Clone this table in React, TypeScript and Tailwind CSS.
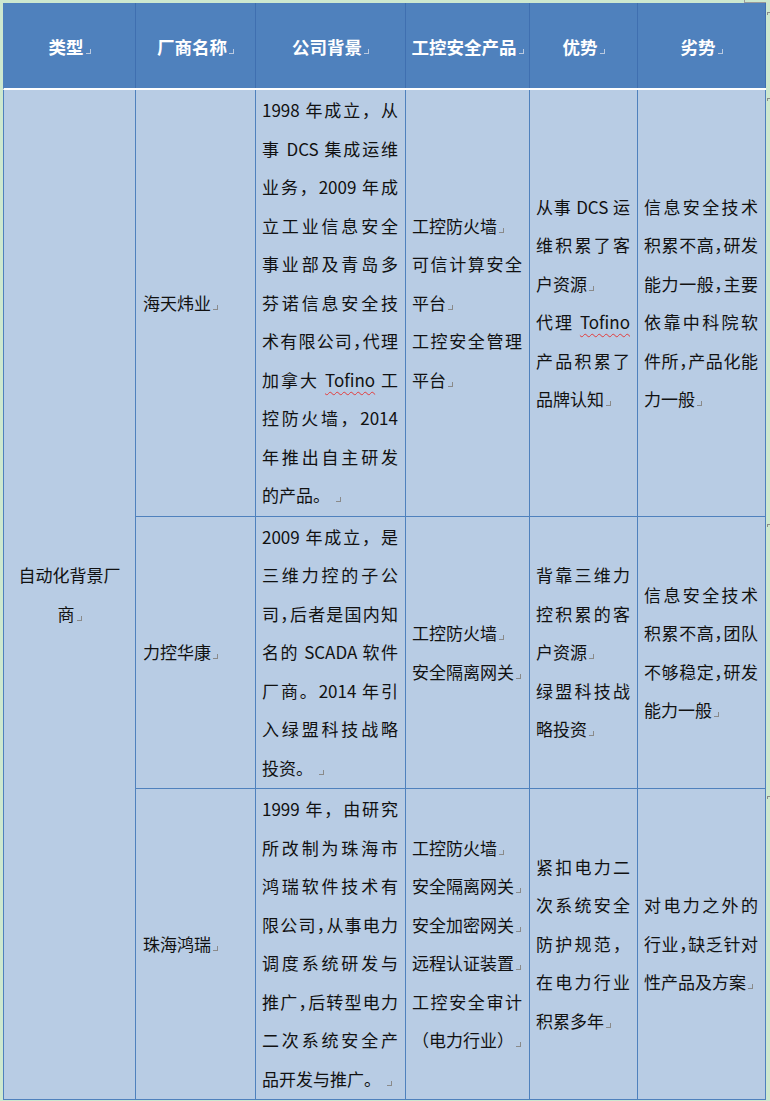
import React from "react";

type Ln = { t: React.ReactNode; j?: boolean };

const Mark = ({ light }: { light?: boolean }) => (
  <span
    className={
      light
        ? "inline-block w-[5px] h-[5px] ml-[2px] border-r border-b border-[#b9c9e0] align-baseline"
        : "inline-block w-[5px] h-[5px] ml-[2px] border-r border-b border-[#8a8a8a] align-baseline"
    }
  />
);

const C = () => <span className="tracking-[-0.5em]">，</span>;

const Tof = () => (
  <span className="underline decoration-wavy decoration-[#e23b3b] decoration-1 underline-offset-[4px]">
    Tofino
  </span>
);

const Lines = ({ lines }: { lines: Ln[] }) => (
  <>
    {lines.map((l, i) => (
      <div
        key={i}
        className={l.j ? "text-justify [text-align-last:justify]" : "text-left"}
      >
        {l.t}
      </div>
    ))}
  </>
);

const Cell = ({
  lines,
  className = "",
}: {
  lines: Ln[];
  className?: string;
}) => (
  <div
    className={
      "border-r border-b border-[#4f81bd] flex flex-col justify-center pl-[6px] pr-[7px] " +
      className
    }
  >
    <Lines lines={lines} />
  </div>
);

const e = (s: React.ReactNode): Ln => ({
  t: (
    <>
      {s}
      <Mark />
    </>
  ),
});
const j = (s: React.ReactNode): Ln => ({ t: s, j: true });

const headers = ["类型", "厂商名称", "公司背景", "工控安全产品", "优势", "劣势"];
const headerW = [
  "w-[132px]",
  "w-[120px]",
  "w-[150px]",
  "w-[124px]",
  "w-[108px]",
  "w-[128px]",
];

export default function App() {
  return (
    <div className="relative w-[770px] h-[1101px] overflow-hidden bg-[#cde8cf] pt-[3px] pl-[3px] font-['Noto_Sans_CJK_SC','Noto_Sans',sans-serif] text-[17px] leading-[38.5px] text-[#111]">
      {/* corner mark */}
      <div className="absolute left-[744px] top-0 w-px h-[3px] bg-[#9a9a9a]" />
      <div className="absolute left-[744px] top-[2px] w-[22px] h-px bg-[#9a9a9a]" />
      {/* end-of-row marks */}
      <div className="absolute left-[767px] top-[12px] w-[3px] h-[3px] border-t border-l border-[#8a8a8a]" />
      <div className="absolute left-[767px] top-[98px] w-[3px] h-[3px] border-t border-l border-[#8a8a8a]" />
      <div className="absolute left-[767px] top-[524px] w-[3px] h-[3px] border-t border-l border-[#8a8a8a]" />
      <div className="absolute left-[767px] top-[796px] w-[3px] h-[3px] border-t border-l border-[#8a8a8a]" />

      <div className="w-[763px]">
        {/* header */}
        <div className="flex h-[87px] bg-[#4f81bd] border-l border-[#4f81bd] border-b-2 border-b-white">
          {headers.map((h, i) => (
            <div
              key={h}
              className={
                headerW[i] +
                " flex items-center justify-center pt-[4px] border-r border-[#3f6fb0] text-white font-bold text-[17.5px]"
              }
            >
              <span>
                {h}
                <Mark light />
              </span>
            </div>
          ))}
        </div>

        {/* body */}
        <div className="grid grid-cols-[132px_120px_150px_124px_108px_128px] grid-rows-[427px_272px_311px] bg-[#b8cce4] border-l border-[#4f81bd]">
          <div className="row-span-3 border-r border-b border-[#4f81bd] flex flex-col justify-center text-center px-[6px]">
            <div>自动化背景厂</div>
            <div>
              商<Mark />
            </div>
          </div>

          {/* row 1 */}
          <Cell lines={[e("海天炜业")]} className="pl-[7px]" />
          <Cell
            lines={[
              j("1998 年成立，从"),
              j("事 DCS 集成运维"),
              j("业务，2009 年成"),
              j("立工业信息安全"),
              j("事业部及青岛多"),
              j("芬诺信息安全技"),
              j(
                <>
                  术有限公司
                  <C />
                  代理
                </>
              ),
              j(
                <>
                  加拿大 <Tof /> 工
                </>
              ),
              j("控防火墙，2014"),
              j("年推出自主研发"),
              e("的产品。 "),
            ]}
          />
          <Cell
            lines={[
              e("工控防火墙"),
              j("可信计算安全"),
              e("平台"),
              j("工控安全管理"),
              e("平台"),
            ]}
          />
          <Cell
            lines={[
              j("从事 DCS 运"),
              j("维积累了客"),
              e("户资源"),
              j(
                <>
                  代理 <Tof />
                </>
              ),
              j("产品积累了"),
              e("品牌认知"),
            ]}
          />
          <Cell
            lines={[
              j("信息安全技术"),
              j(
                <>
                  积累不高
                  <C />
                  研发
                </>
              ),
              j(
                <>
                  能力一般
                  <C />
                  主要
                </>
              ),
              j("依靠中科院软"),
              j(
                <>
                  件所
                  <C />
                  产品化能
                </>
              ),
              e("力一般"),
            ]}
          />

          {/* row 2 */}
          <Cell lines={[e("力控华康")]} className="pl-[7px]" />
          <Cell
            lines={[
              j("2009 年成立，是"),
              j("三维力控的子公"),
              j(
                <>
                  司<C />
                  后者是国内知
                </>
              ),
              j("名的 SCADA 软件"),
              j("厂商。2014 年引"),
              j("入绿盟科技战略"),
              e("投资。 "),
            ]}
          />
          <Cell lines={[e("工控防火墙"), e("安全隔离网关")]} />
          <Cell
            lines={[
              j("背靠三维力"),
              j("控积累的客"),
              e("户资源"),
              j("绿盟科技战"),
              e("略投资"),
            ]}
          />
          <Cell
            lines={[
              j("信息安全技术"),
              j(
                <>
                  积累不高
                  <C />
                  团队
                </>
              ),
              j(
                <>
                  不够稳定
                  <C />
                  研发
                </>
              ),
              e("能力一般"),
            ]}
          />

          {/* row 3 */}
          <Cell lines={[e("珠海鸿瑞")]} className="pl-[7px]" />
          <Cell
            lines={[
              j("1999 年，由研究"),
              j("所改制为珠海市"),
              j("鸿瑞软件技术有"),
              j(
                <>
                  限公司
                  <C />
                  从事电力
                </>
              ),
              j("调度系统研发与"),
              j(
                <>
                  推广
                  <C />
                  后转型电力
                </>
              ),
              j("二次系统安全产"),
              e("品开发与推广。 "),
            ]}
          />
          <Cell
            lines={[
              e("工控防火墙"),
              e("安全隔离网关"),
              e("安全加密网关"),
              e("远程认证装置"),
              j("工控安全审计"),
              e("（电力行业）"),
            ]}
          />
          <Cell
            lines={[
              j("紧扣电力二"),
              j("次系统安全"),
              j("防护规范，"),
              j("在电力行业"),
              e("积累多年"),
            ]}
          />
          <Cell
            lines={[
              j("对电力之外的"),
              j(
                <>
                  行业
                  <C />
                  缺乏针对
                </>
              ),
              e("性产品及方案"),
            ]}
          />
        </div>
      </div>
    </div>
  );
}
